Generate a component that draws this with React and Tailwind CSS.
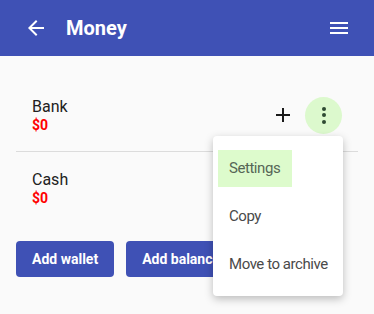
function Icon({ d, className }) {
    return (
        <svg width="24" height="24" viewBox="0 0 24 24" className={className} fill="currentColor">
            <path d={d} />
        </svg>
    );
}

function Wallet({ name, amount, actions }) {
    return (
        <div className="flex items-center h-[72px] pl-4 pr-4">
            <div className="flex flex-col">
                <span className="text-base leading-5 text-[#212121]">{name}</span>
                <span className="text-sm font-bold leading-4 text-[#ff0000]">{amount}</span>
            </div>
            {actions}
        </div>
    );
}

export default function App() {
    return (
        <div className="relative w-[374px] h-[314px] bg-[#fafafa] overflow-hidden font-['Roboto',sans-serif]">
            <header className="flex items-center h-[56px] bg-[#3f51b5] text-white pl-[24px] pr-[23px]">
                <Icon d="M20 11H7.83l5.59-5.59L12 4l-8 8 8 8 1.41-1.41L7.83 13H20v-2z" />
                <h1 className="ml-[18px] text-xl font-bold">Money</h1>
                <Icon d="M3 18h18v-2H3v2zm0-5h18v-2H3v2zm0-7v2h18V6H3z" className="ml-auto" />
            </header>

            <div className="px-4 pt-[23px]">
                <Wallet
                    name="Bank"
                    amount="$0"
                    actions={
                        <div className="ml-auto flex items-center">
                            <Icon d="M19 13h-6v6h-2v-6H5v-2h6V5h2v6h6v2z" className="text-[#1a1a1a]" />
                            <div className="ml-[10px] w-[37px] h-[37px] rounded-full bg-[#dcf9cd] flex flex-col items-center justify-center gap-[2.5px]">
                                <span className="w-[4px] h-[4px] rounded-full bg-[#2e4a32]" />
                                <span className="w-[4px] h-[4px] rounded-full bg-[#2e4a32]" />
                                <span className="w-[4px] h-[4px] rounded-full bg-[#2e4a32]" />
                            </div>
                        </div>
                    }
                />
                <div className="border-t border-[#dcdcdc]" />
                <Wallet name="Cash" amount="$0" />
                <div className="flex gap-3 mt-[17px]">
                    <button className="h-9 px-4 rounded bg-[#3f51b5] text-white text-sm font-bold">Add wallet</button>
                    <button className="h-9 px-4 rounded bg-[#3f51b5] text-white text-sm font-bold">Add balance</button>
                </div>
            </div>

            <div className="absolute left-[213px] top-[136px] w-[130px] py-2 bg-white rounded shadow-[0_3px_8px_rgba(0,0,0,0.25)] text-[15px] tracking-[-0.45px] text-[#4a4a4a] whitespace-nowrap">
                <div className="h-12 flex items-center px-[5px]">
                    <span className="h-[37px] w-[74px] flex items-center pl-[11px] bg-[#ddfbcc] text-[#566656]">Settings</span>
                </div>
                <div className="h-12 flex items-center px-4">Copy</div>
                <div className="h-12 flex items-center px-4">Move to archive</div>
            </div>
        </div>
    );
}
